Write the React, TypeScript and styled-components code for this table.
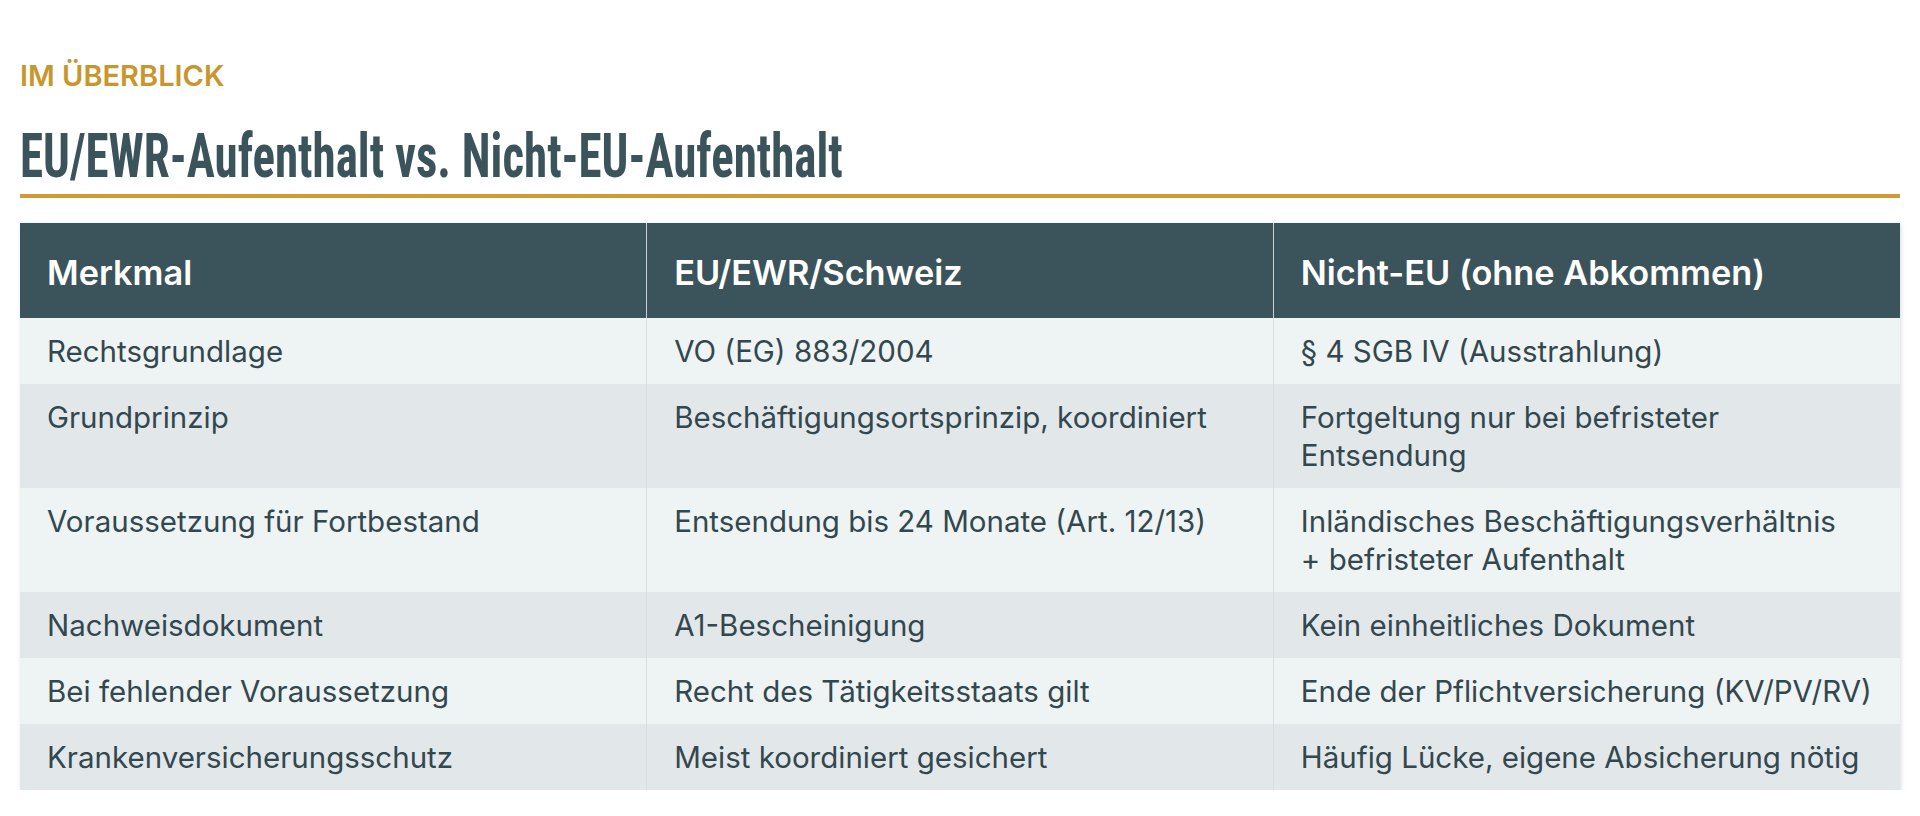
import React from "react";
import styled, { createGlobalStyle } from "styled-components";

const GlobalStyle = createGlobalStyle`
  html, body { margin: 0; padding: 0; background: #ffffff; }
  body { font-family: "Inter", "Noto Sans", sans-serif; color: #33474e; }
  * { box-sizing: border-box; }
`;

const Page = styled.main`
  padding: 61px 20px 0 20px;
  width: 1920px;
`;

const Eyebrow = styled.div`
  font-family: "Inter", sans-serif;
  font-weight: 600;
  font-size: 29px;
  line-height: 1;
  color: #c9962e;
  text-transform: uppercase;
`;

const Title = styled.h2`
  margin: 35px 0 0 0;
  font-family: "Roboto Condensed", "Roboto", sans-serif;
  font-weight: 700;
  font-size: 62px;
  line-height: 1;
  color: #3b535b;
  padding-bottom: 7px;
  border-bottom: 4px solid #d19a35;
  white-space: nowrap;
`;

const TitleText = styled.span`
  display: inline-block;
  transform: scaleX(0.758);
  transform-origin: left center;
`;

const TableWrap = styled.div`
  margin-top: 25px;
  box-shadow: 1px 1px 4px rgba(40, 60, 70, 0.18);
`;

const Table = styled.table`
  width: 100%;
  border-collapse: collapse;
  table-layout: fixed;
`;

const HeadCell = styled.th<{ $first?: boolean }>`
  background: #3b535b;
  color: #ffffff;
  text-align: left;
  font-family: "Inter", sans-serif;
  font-weight: 600;
  font-size: 34.3px;
  line-height: 44px;
  padding: 28px 27px 23px 27px;
  border-left: ${(p) => (p.$first ? "none" : "1px solid #c9d2d5")};
`;

const Row = styled.tr<{ $alt: boolean }>`
  background: ${(p) => (p.$alt ? "#e2e8ea" : "#eef3f4")};
`;

const Cell = styled.td<{ $first?: boolean }>`
  vertical-align: top;
  font-family: "Inter", sans-serif;
  font-weight: 400;
  font-size: 29.5px;
  line-height: 38px;
  padding: 14px 27px 14px 27px;
  color: #33474e;
  border-left: ${(p) => (p.$first ? "none" : "1px solid #d6dfe2")};
`;

const Line = styled.span`
  display: block;
  white-space: nowrap;
`;

type CellText = string | string[];

const headers = ["Merkmal", "EU/EWR/Schweiz", "Nicht-EU (ohne Abkommen)"];

const rows: CellText[][] = [
  ["Rechtsgrundlage", "VO (EG) 883/2004", "§ 4 SGB IV (Ausstrahlung)"],
  ["Grundprinzip", "Beschäftigungsortsprinzip, koordiniert", ["Fortgeltung nur bei befristeter", "Entsendung"]],
  ["Voraussetzung für Fortbestand", "Entsendung bis 24 Monate (Art. 12/13)", ["Inländisches Beschäftigungsverhältnis", "+ befristeter Aufenthalt"]],
  ["Nachweisdokument", "A1-Bescheinigung", "Kein einheitliches Dokument"],
  ["Bei fehlender Voraussetzung", "Recht des Tätigkeitsstaats gilt", "Ende der Pflichtversicherung (KV/PV/RV)"],
  ["Krankenversicherungsschutz", "Meist koordiniert gesichert", "Häufig Lücke, eigene Absicherung nötig"],
];

const renderText = (t: CellText) =>
  (Array.isArray(t) ? t : [t]).map((l, i) => <Line key={i}>{l}</Line>);

export default function App() {
  return (
    <>
      <GlobalStyle />
      <Page>
        <Eyebrow>Im Überblick</Eyebrow>
        <Title>
          <TitleText>EU/EWR-Aufenthalt vs. Nicht-EU-Aufenthalt</TitleText>
        </Title>
        <TableWrap>
          <Table>
            <thead>
              <tr>
                {headers.map((h, i) => (
                  <HeadCell key={h} $first={i === 0}>
                    {h}
                  </HeadCell>
                ))}
              </tr>
            </thead>
            <tbody>
              {rows.map((r, ri) => (
                <Row key={ri} $alt={ri % 2 === 1}>
                  {r.map((c, ci) => (
                    <Cell key={ci} $first={ci === 0}>
                      {renderText(c)}
                    </Cell>
                  ))}
                </Row>
              ))}
            </tbody>
          </Table>
        </TableWrap>
      </Page>
    </>
  );
}
